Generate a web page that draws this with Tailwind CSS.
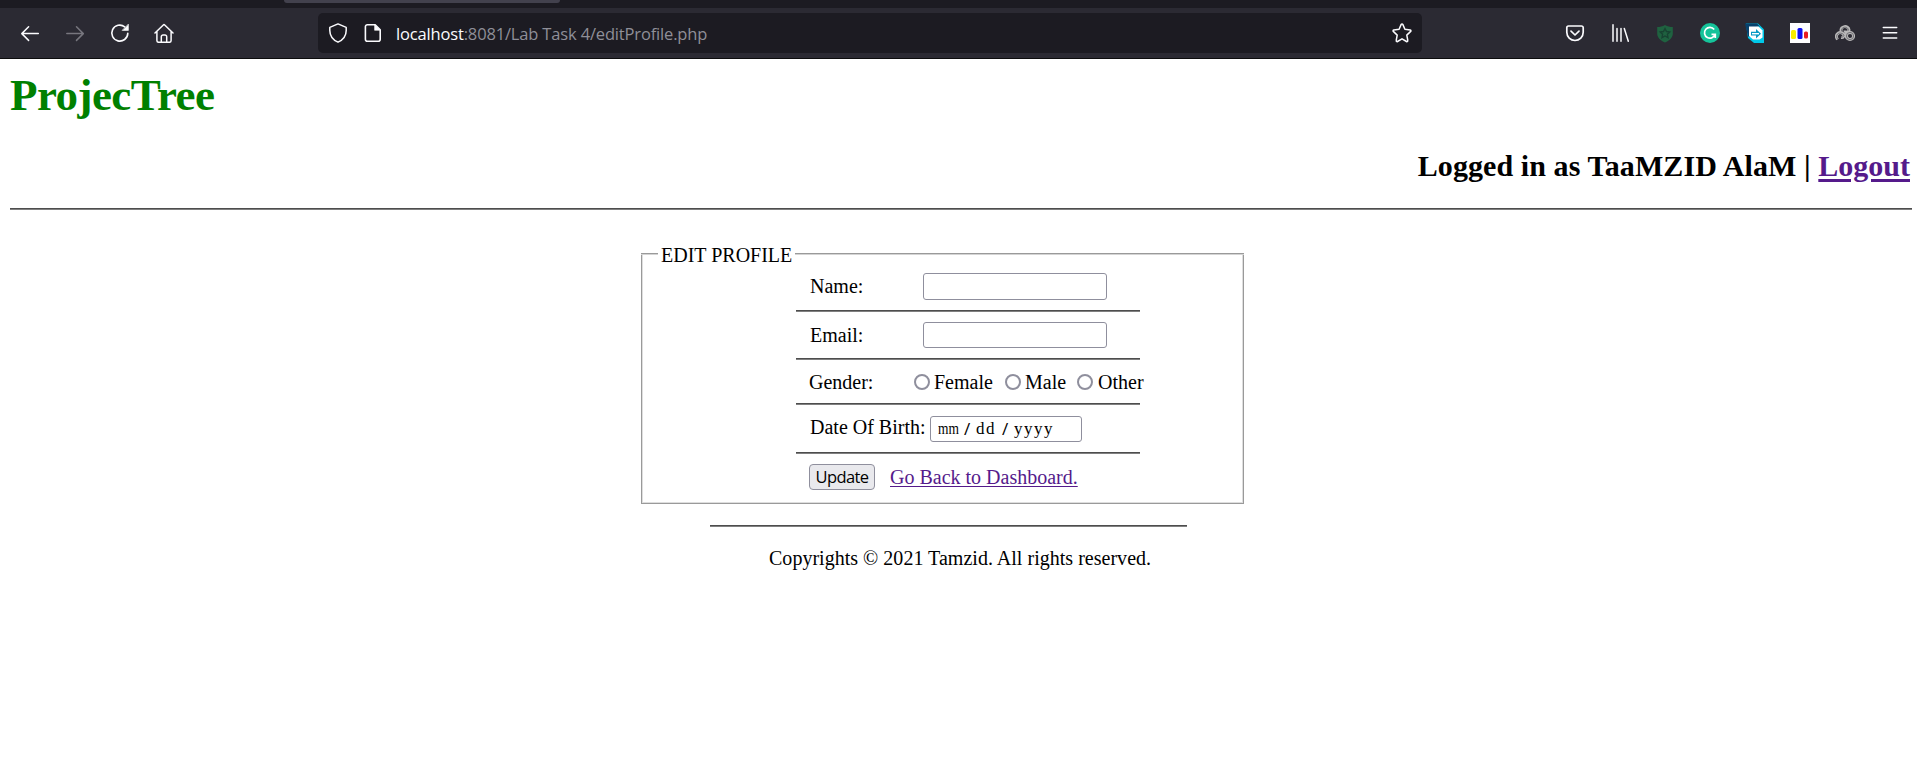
<!DOCTYPE html>
<html lang="en">
<head>
<meta charset="utf-8">
<title>Edit Profile</title>
<script src="https://cdn.jsdelivr.net/npm/@tailwindcss/browser@4"></script>
</head>
<body class="bg-white text-black w-[1917px] h-[764px] overflow-hidden font-['Liberation_Serif',serif] text-[20px] leading-[23px]">
<!-- Browser chrome -->
<div class="h-2 bg-[#1c1b22]"><div class="ml-[284px] w-[276px] h-[3px] bg-[#42414d] rounded-b-sm"></div></div>
<nav class="h-[51px] bg-[#2b2a33] border-b border-[#0c0c0d] flex items-start pt-[5px] text-[#fbfbfe]">
  <div class="flex pl-5 pt-[10px] gap-[25px] w-[318px]">
    <svg class="w-5 h-5" viewBox="0 0 20 20" fill="none" stroke="currentColor" stroke-width="1.5" stroke-linecap="round" stroke-linejoin="round"><path d="M18.3 10.6H1.8M8.6 3.8L1.8 10.6l6.8 6.8"/></svg>
    <svg class="w-5 h-5 text-[#77767e]" viewBox="0 0 20 20" fill="none" stroke="currentColor" stroke-width="1.5" stroke-linecap="round" stroke-linejoin="round"><path d="M1.8 10.6h16.5M11.5 3.8l6.8 6.8-6.8 6.8"/></svg>
    <svg class="w-5 h-5" viewBox="0 0 20 20" fill="none" stroke="currentColor" stroke-width="1.6" stroke-linecap="round"><path d="M17.8 10.4A8 8 0 1 1 14.7 3.8"/><path d="M18.4 1.4v6h-6z" fill="currentColor" stroke-width=".6" stroke-linejoin="round"/></svg>
    <svg class="w-5 h-5 -ml-px" viewBox="0 0 20 20" fill="none" stroke="currentColor" stroke-width="1.5" stroke-linecap="round" stroke-linejoin="round"><path d="M1 10l8.3-8a1 1 0 0 1 1.4 0L19 10M2.9 8.5v9a1.8 1.8 0 0 0 1.8 1.8h10.6a1.8 1.8 0 0 0 1.8-1.8v-9M7.3 19v-5.3a1.7 1.7 0 0 1 1.7-1.7h2a1.7 1.7 0 0 1 1.7 1.7V19"/></svg>
  </div>
  <div class="w-[1104px] h-10 rounded-[5px] bg-[#1c1b22] flex items-center">
    <svg class="ml-[10px] w-5 h-5" viewBox="0 0 20 20" fill="none" stroke="currentColor" stroke-width="1.5" stroke-linejoin="round"><path d="M10 .9L1.8 4.4v3c0 5.3 3.5 9.5 8.2 11.8 4.700-2.300 8.200-6.500 8.200-11.800v-3z"/></svg>
    <svg class="ml-[15px] w-5 h-5" viewBox="0 0 20 20" fill="none" stroke="currentColor" stroke-width="1.6" stroke-linejoin="round"><path d="M4.400 1.700h7.800l5 5v9.600a2 2 0 0 1-2 2H4.400a2 2 0 0 1-2-2V3.700a2 2 0 0 1 2-2z"/><path d="M11.600 1.700v5.600h5.600z" fill="currentColor" stroke-width=".6"/></svg>
    <div class="ml-[13px] mt-[2px] flex-1 font-['Open_Sans','Noto_Sans',sans-serif] text-[16.5px] tracking-[-0.16px] leading-5 whitespace-nowrap text-[#8f8f98]"><span class="text-[#fbfbfe]">localhost</span>:8081/Lab Task 4/editProfile.php</div>
    <svg class="mr-[10px] w-5 h-5" viewBox="0 0 20 20" fill="none" stroke="currentColor" stroke-width="1.5" stroke-linejoin="round"><path d="M9.200 1.400a.9.900 0 0 1 1.600 0l2.100 4.900 5.300.6a.9.900 0 0 1 .5 1.500l-3.900 3.700 1 5.400a.9.900 0 0 1-1.300 1L10 15.800l-4.500 2.700a.9.900 0 0 1-1.300-1l1-5.400-3.900-3.700a.9.900 0 0 1 .5-1.500l5.300-.6z"/></svg>
  </div>
  <div class="ml-[143px] pt-[10px] flex gap-[25px]">
    <svg class="w-5 h-5" viewBox="0 0 20 20" fill="none" stroke="currentColor" stroke-width="1.700" stroke-linecap="round" stroke-linejoin="round"><path d="M3.500 3h13A1.700 1.700 0 0 1 18.200 4.700V9.300a8.200 8.200 0 0 1-16.400 0V4.700A1.700 1.700 0 0 1 3.500 3zM6 8.200l4 3.800 4-3.800"/></svg>
    <svg class="w-5 h-5" viewBox="0 0 20 20" fill="none" stroke="currentColor" stroke-width="1.500" stroke-linecap="round"><path d="M3 1.800v16.400M7 5.500v12.700M11 5.500v12.700M14.300 5.500l4 12.700"/></svg>
    <svg class="w-5 h-5" viewBox="0 0 20 20"><path d="M10 2c2.500 1.500 5 2 7.800 2v6.500c0 4-3 7-7.800 9-4.800-2-7.800-5-7.800-9V4C5 4 7.500 3.500 10 2z" fill="#1f6240"/><path d="M10 5.500l1.500 3 3.300.5-2.400 2.300.6 3.300-3-1.600-3 1.600.6-3.300L5.200 9l3.300-.5z" fill="none" stroke="#184332" stroke-width="1.400"/></svg>
    <svg class="w-5 h-5" viewBox="0 0 20 20"><circle cx="10" cy="10" r="10" fill="#15c39a"/><path d="M14.200 6.500a5.400 5.400 0 1 0 .9 4.800h-3.600M15.300 11v4" fill="none" stroke="#fff" stroke-width="1.700"/></svg>
    <svg class="w-5 h-5" viewBox="0 0 20 20"><path d="M1 .5h12l6 6V20H9L3 15z" fill="#00c8e8"/><path d="M0 .5h12l3 3-10 1v9H3z" fill="#07416c"/><path d="M4 3.500h9.500l4 4v7l-3 2H8L4 13z" fill="#fff"/><path d="M6 8.800h5V6l5 4.700-5 4.700v-2.800H6z" fill="#079ac4"/><path d="M7 10.700h7" stroke="#fff" stroke-width="1.400"/></svg>
    <svg class="w-5 h-5" viewBox="0 0 20 20"><path d="M0 0h20v20H0z" fill="#fff"/><rect x="1" y="7" width="5" height="9" rx="1.500" fill="#f8ed00"/><rect x="7.500" y="5" width="5" height="11" rx="1.500" fill="#1010ed"/><rect x="14" y="8.500" width="4" height="7" rx="1.500" fill="#e91c20"/></svg>
    <svg class="w-5 h-5" viewBox="0 0 20 20" fill="none"><g stroke="#b9b8b9" stroke-width="3"><path d="M2.500 16.500c-3-4.500 1-8 4.500-6.500s1.500 5-.8 4.500"/><path d="M6 8.500C5 2.500 13.500 2 14 7c0 3-4 3-4 .5"/><circle cx="15" cy="13" r="3.600"/><path d="M9.500 10.500l3 5"/></g><g stroke="#55545a" stroke-width=".7"><path d="M2.500 16c-2.500-4 1-7 4.500-5.500s1.300 4-.8 3.500"/><path d="M6.500 8c-.5-5 7-5 7-.5"/><circle cx="15" cy="13" r="3.600"/></g></svg>
    <svg class="w-5 h-5" viewBox="0 0 20 20" stroke="currentColor" stroke-width="1.500" stroke-linecap="round"><path d="M3.300 4.500h13.400M3.300 9.800h13.400M3.300 15h13.400"/></svg>
  </div>
</nav>

<!-- Page header -->
<main class="pl-[10px] w-[1912px]">
  <h1 class="pt-[11px] h-[80px] text-[45px] tracking-[-0.55px] leading-[50px] font-bold text-[#008000]">ProjecTree</h1>
  <h2 class="h-[69px] pt-[10px] pr-[2px] text-[30px] leading-[34px] font-bold text-right"><span class="tracking-[0.08px]">Logged in as TaaMZID AlaM | </span><a class="text-[#551a8b] underline decoration-[3px] underline-offset-[3px]" href="#">Logout</a></h2>
  <div class="h-[2px] bg-[#808080] border-t border-[#4d4d4d]"></div>

  <!-- Profile form -->
  <form class="ml-[631px] mt-[34px] w-[603px]">
    <div class="flex items-center h-[21px]">
      <span class="w-[17px] h-[2px] -mt-px bg-[#d4d4d4] border-t border-[#9a9a9a]"></span>
      <span class="w-[137px] pl-[3px] whitespace-nowrap pt-[2px]">EDIT PROFILE</span>
      <span class="flex-1 h-[2px] -mt-px bg-[#d4d4d4] border-t border-[#9a9a9a]"></span>
    </div>
    <div class="-mt-[11px] h-[250px] border-x border-b border-[#9a9a9a] pl-[154px] pt-[19px] shadow-[inset_1px_0_#dedede,inset_-1px_0_#dedede,inset_0_-1px_#dedede]">
      <div class="w-[344px]">
        <div class="h-[37px] flex items-start pl-[14px]"><label class="w-[113px] pt-[2px]" for="n">Name:</label><input id="n" class="w-[184px] h-[27px] border border-[#8f8f9d] rounded-[3px]"></div>
        <div class="h-[2px] bg-[#808080] border-t border-[#4d4d4d]"></div>
        <div class="h-[46px] flex items-start pl-[14px] pt-[10px]"><label class="w-[113px] pt-[2px]" for="e">Email:</label><input id="e" class="w-[184px] h-[26px] border border-[#8f8f9d] rounded-[3px]"></div>
        <div class="h-[2px] bg-[#808080] border-t border-[#4d4d4d]"></div>
        <div class="h-[43px] flex items-start pl-[13px] pt-[11px] whitespace-nowrap"><span class="w-[105px] shrink-0">Gender:</span>
          <label class="w-[91px] shrink-0 flex gap-1"><span class="mt-[3px] w-4 h-4 rounded-full border-2 border-[#8f8f9d]"></span>Female</label>
          <label class="w-[72px] shrink-0 flex gap-1"><span class="mt-[3px] w-4 h-4 rounded-full border-2 border-[#8f8f9d]"></span>Male</label>
          <label class="shrink-0 flex gap-[5px]"><span class="mt-[3px] w-4 h-4 shrink-0 rounded-full border-2 border-[#8f8f9d]"></span>Other</label></div>
        <div class="h-[2px] bg-[#808080] border-t border-[#4d4d4d]"></div>
        <div class="h-[47px] flex items-start pl-[14px] pt-[11px]"><label class="w-[120px] whitespace-nowrap">Date Of Birth:</label>
          <div class="w-[152px] h-[26px] border border-[#8f8f9d] rounded-[3px] flex items-center pl-[7px] text-[17px] leading-6"><span class="w-[26px]"><span class="inline-block origin-left scale-x-[.79]">mm</span></span><span class="w-3 font-['Open_Sans',sans-serif]">/</span><span class="w-[26px] tracking-[1.5px]">dd</span><span class="w-3 font-['Open_Sans',sans-serif]">/</span><span class="tracking-[1.5px]">yyyy</span></div></div>
        <div class="h-[2px] bg-[#808080] border-t border-[#4d4d4d]"></div>
        <div class="flex items-start pl-[13px] pt-[10px]"><button class="w-[66px] h-[26px] rounded-[4px] border border-[#8f8f9d] bg-[#e9e9ed] font-['Open_Sans',sans-serif] text-[16.5px] leading-6 tracking-[-0.6px]" type="button">Update</button><a class="ml-[15px] pt-[2px] whitespace-nowrap text-[#551a8b] underline decoration-1 underline-offset-[2px]" href="#">Go Back to Dashboard.</a></div>
      </div>
    </div>
  </form>

  <footer class="ml-[700px] mt-[21px] w-[477px]">
    <div class="h-[2px] bg-[#808080] border-t border-[#4d4d4d]"></div>
    <p class="mt-[20px] pl-[59px] whitespace-nowrap tracking-[0.02px]">Copyrights © 2021 Tamzid. All rights reserved.</p>
  </footer>
</main>
</body>
</html>
